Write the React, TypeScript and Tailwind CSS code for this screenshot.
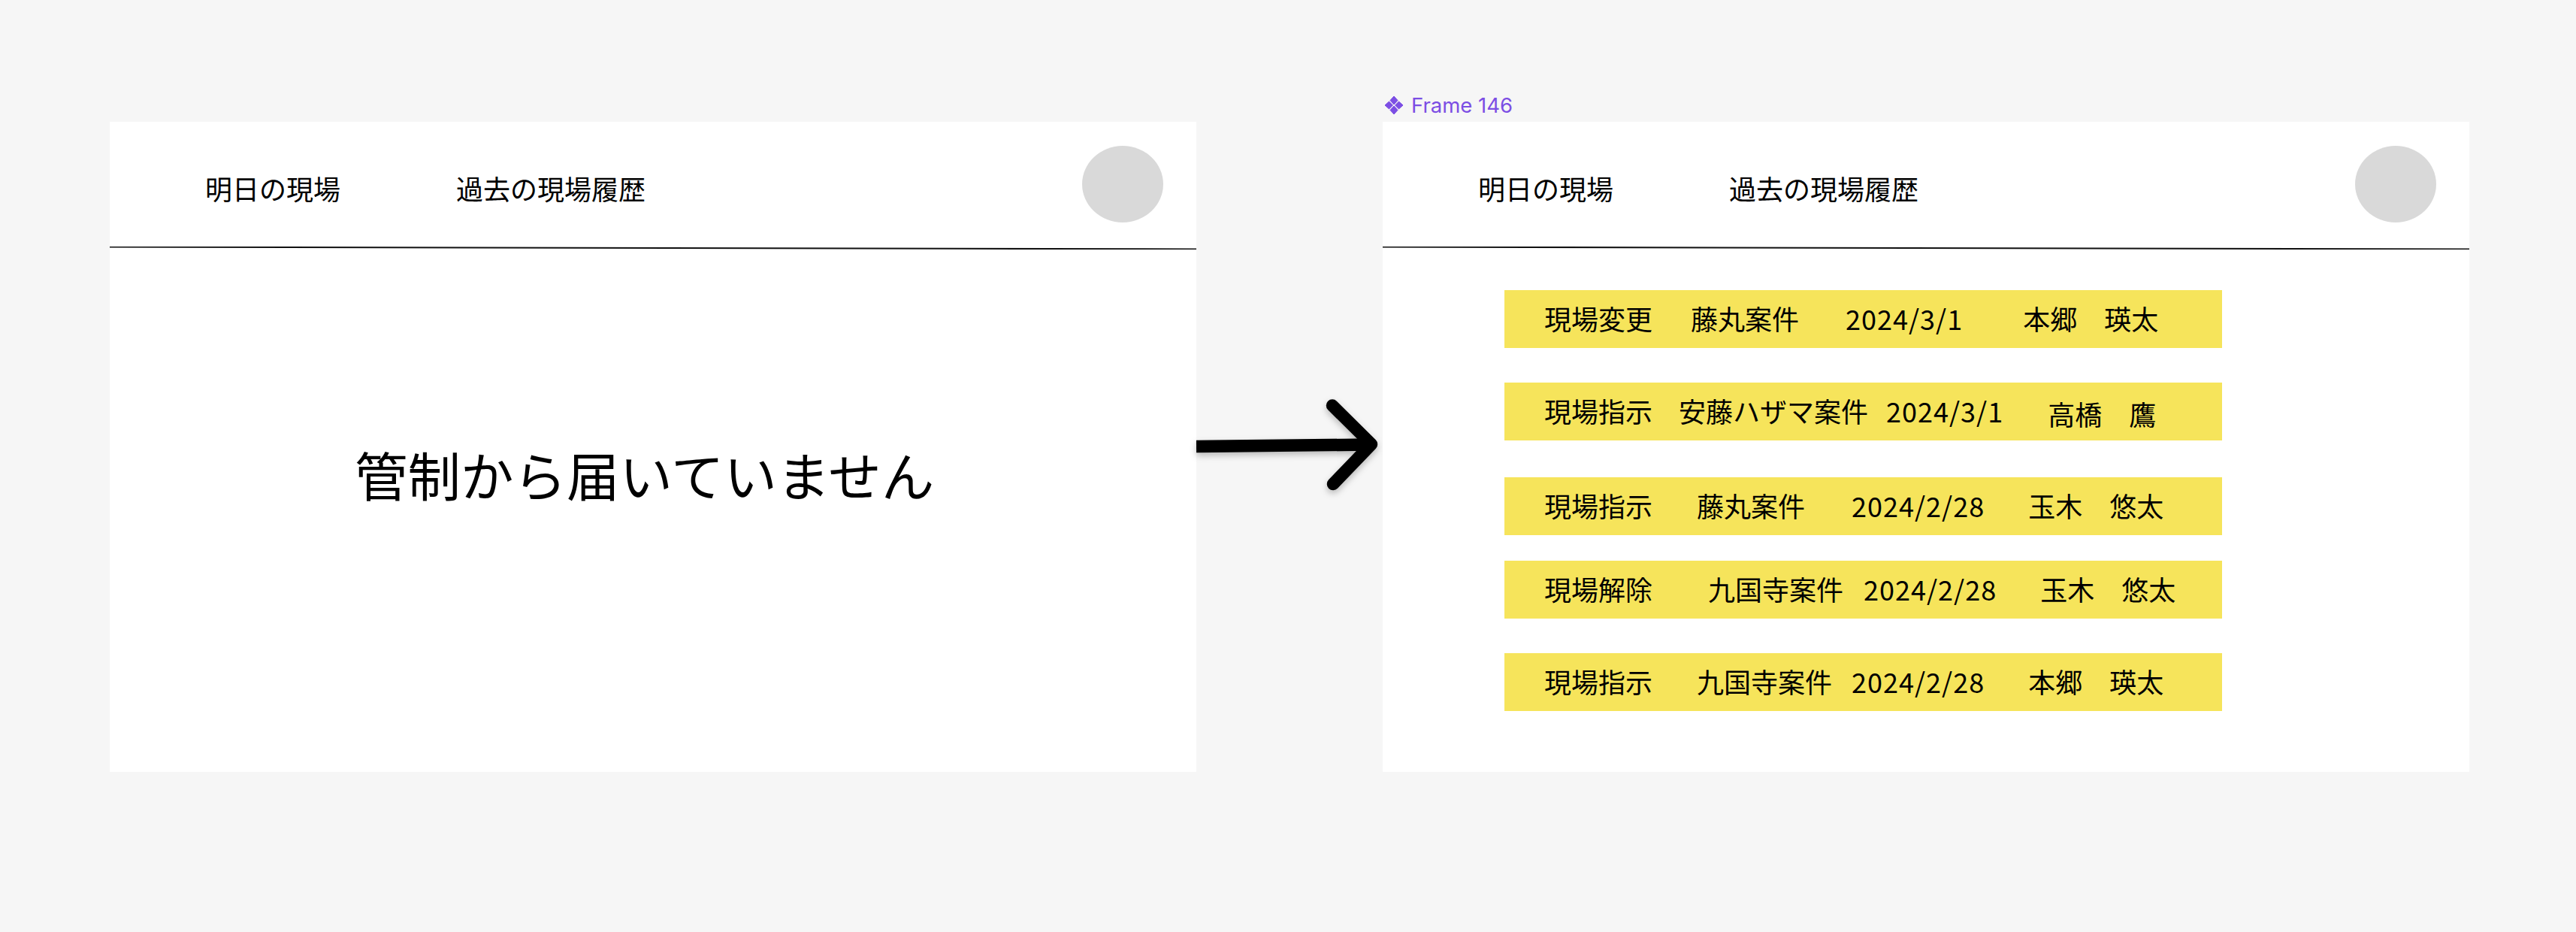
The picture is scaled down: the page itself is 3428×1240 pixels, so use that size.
const cjk = "font-['Noto_Sans_CJK_JP','Noto_Sans',sans-serif]";

interface Row {
  type: string;
  site: string;
  date: string;
  person: string;
  rowClass: string;
  siteClass: string;
  dateClass: string;
  personClass: string;
}

const rows: Row[] = [
  { type: '現場変更', site: '藤丸案件', date: '2024/3/1', person: '本郷　瑛太', rowClass: 'mt-[54px]', siteClass: 'ml-[51px]', dateClass: 'ml-[62px]', personClass: 'ml-[80px]' },
  { type: '現場指示', site: '安藤ハザマ案件', date: '2024/3/1', person: '高橋　鷹', rowClass: 'mt-[46px]', siteClass: 'ml-[35px]', dateClass: 'ml-[24px]', personClass: 'ml-[59px] mt-[8px]' },
  { type: '現場指示', site: '藤丸案件', date: '2024/2/28', person: '玉木　悠太', rowClass: 'mt-[49px]', siteClass: 'ml-[59px]', dateClass: 'ml-[62px]', personClass: 'ml-[58px]' },
  { type: '現場解除', site: '九国寺案件', date: '2024/2/28', person: '玉木　悠太', rowClass: 'mt-[34px]', siteClass: 'ml-[74px]', dateClass: 'ml-[27px]', personClass: 'ml-[58px]' },
  { type: '現場指示', site: '九国寺案件', date: '2024/2/28', person: '本郷　瑛太', rowClass: 'mt-[46px]', siteClass: 'ml-[59px]', dateClass: 'ml-[26px]', personClass: 'ml-[58px]' },
];

function Header() {
  return (
    <div className="relative h-[170px] shrink-0">
      <nav className="flex items-center pl-[127px] pt-[60px] text-[36px] leading-[56px] text-black">
        <span>明日の現場</span>
        <span className="ml-[154px]">過去の現場履歴</span>
      </nav>
      <div className="absolute left-[1294px] top-[32px] h-[102px] w-[108px] rounded-[50%] bg-[#d9d9d9]" />
      <svg className="absolute bottom-0 left-0 h-[4px] w-full" viewBox="0 0 1446 4" preserveAspectRatio="none">
        <line x1="0" y1="0.5" x2="1446" y2="3.5" stroke="#111" strokeWidth="2" />
      </svg>
    </div>
  );
}

function Arrow() {
  return (
    <svg className="h-[865px] w-[248px] shrink-0 overflow-visible drop-shadow-[0_4px_4px_rgba(0,0,0,0.25)]" viewBox="0 0 248 865" fill="none">
      <path d="M0 432 L232 429.5" stroke="#000" strokeWidth="16.5" />
      <path d="M181 377.5 L233 429 L182 482" stroke="#000" strokeWidth="16.5" strokeLinecap="round" strokeLinejoin="round" />
    </svg>
  );
}

export default function App() {
  return (
    <div className={`flex h-[1240px] w-[3428px] items-start overflow-hidden bg-[#f6f6f6] pl-[146px] pt-[162px] ${cjk}`}>
      <section className="flex h-[865px] w-[1446px] shrink-0 flex-col bg-white">
        <Header />
        <p className="pl-[326px] pt-[246px] text-[70.5px] leading-[104px] text-black">管制から届いていません</p>
      </section>

      <Arrow />

      <section className="relative flex h-[865px] w-[1446px] shrink-0 flex-col bg-white">
        <div className="absolute -top-[38px] left-[2px] flex items-center gap-[10px] text-[#7c4ee4]">
          <svg className="h-[26px] w-[26px]" viewBox="0 0 26 26" fill="currentColor" stroke="currentColor" strokeWidth="1" strokeLinejoin="round">
            <path d="M13 1 L18 6.5 L13 12 L8 6.5 Z M13 14 L18 19.5 L13 25 L8 19.5 Z M6.5 8 L11.5 13 L6.5 18 L1 13 Z M19.5 8 L25 13 L19.5 18 L14.5 13 Z" />
          </svg>
          <span className="font-['Inter',sans-serif] text-[27.5px] leading-[32px]">Frame 146</span>
        </div>
        <Header />
        <div className="flex flex-col pl-[162px]">
          {rows.map((row) => (
            <div key={row.type + row.site + row.person} className={`flex h-[77px] w-[955px] items-center bg-[#f6e45b] pb-[4px] pl-[53px] text-[36px] leading-[50px] text-black ${row.rowClass}`}>
              <span>{row.type}</span>
              <span className={row.siteClass}>{row.site}</span>
              <span className={`tracking-[1px] ${row.dateClass}`}>{row.date}</span>
              <span className={row.personClass}>{row.person}</span>
            </div>
          ))}
        </div>
      </section>
    </div>
  );
}
